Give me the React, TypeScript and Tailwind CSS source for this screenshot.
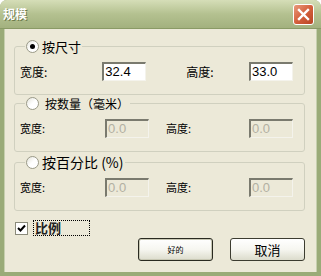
import React from "react";

const cjk = { fontFamily: '"Noto Sans CJK SC", "Noto Sans", sans-serif' };
const latin = { fontFamily: '"Liberation Sans", "Noto Sans CJK SC", sans-serif' };

function Radio({ checked }: { checked?: boolean }) {
  return (
    <span className="flex h-[13px] w-[13px] items-center justify-center rounded-full border border-[#9a9a88] bg-gradient-to-br from-[#e4e4da] via-white to-white">
      {checked ? <span className="h-[5px] w-[5px] rounded-full bg-black" /> : null}
    </span>
  );
}

function Field({ value, disabled }: { value: string; disabled?: boolean }) {
  return (
    <div
      className={`h-[19px] w-[44px] border-t-2 border-l-2 border-t-[#7a7a6e] border-l-[#7a7a6e] border-b border-r border-b-[#f4f3ec] border-r-[#f4f3ec] pl-[1px] text-[13px] leading-[16px] ${
        disabled ? "bg-[#ece9d8] text-[#b2b0a2]" : "bg-white text-black"
      }`}
      style={latin}
    >
      {value}
    </div>
  );
}

function Group({
  title,
  titleClass,
  checked,
  labelClass,
  leftGap,
  rightLabelGap,
  a,
  b,
  disabled,
}: {
  title: string;
  titleClass: string;
  checked?: boolean;
  labelClass: string;
  leftGap: string;
  rightLabelGap: string;
  a: string;
  b: string;
  disabled?: boolean;
}) {
  return (
    <fieldset className="rounded-[3px] border border-[#d0d0bf] px-[5px] pb-[13px] pt-[8px]">
      <legend className="ml-[5px] flex items-center gap-[3px] px-[1px]">
        <Radio checked={checked} />
        <span className={`${titleClass} text-black`} style={cjk}>
          {title}
        </span>
      </legend>
      <div className="flex items-center">
        <span className={`${labelClass} text-black`} style={cjk}>
          宽度:
        </span>
        <div className={leftGap} />
        <Field value={a} disabled={disabled} />
        <div className={rightLabelGap} />
        <span className={`${labelClass} text-black`} style={cjk}>
          高度:
        </span>
        <div className="flex-1" />
        <Field value={b} disabled={disabled} />
        <div className="w-[6px]" />
      </div>
    </fieldset>
  );
}

function Button({ label, isDefault, textClass }: { label: string; isDefault?: boolean; textClass: string }) {
  return (
    <div
      className={`flex h-[23px] w-[75px] items-center justify-center rounded-[3px] border ${
        isDefault ? "border-[#2a2a20] shadow-[inset_0_0_0_1px_#c8c8b4]" : "border-[#3c3c30]"
      } bg-gradient-to-b from-white via-[#f6f6f0] to-[#dcdccc]`}
    >
      <span className={`${textClass} text-black`} style={cjk}>
        {label}
      </span>
    </div>
  );
}

export default function App() {
  return (
    <div className="flex h-[276px] w-[321px] flex-col overflow-hidden rounded-t-[7px] bg-[#9aab78]">
      <div className="flex h-[29px] items-center justify-between border-b border-[#8a9a66] bg-gradient-to-b from-[#d6deb8] via-[#b4c190] to-[#a3b17f] pl-[3px] pr-[7px]">
        <span className="text-[12px] font-bold text-white [text-shadow:1px_1px_0_#6c7a4c]" style={cjk}>
          规模
        </span>
        <div className="flex h-[21px] w-[21px] items-center justify-center rounded-[3px] border border-white bg-gradient-to-br from-[#e89a7c] via-[#d4603c] to-[#b84424]">
          <svg width="13" height="13" viewBox="0 0 13 13">
            <path d="M2 2 L11 11 M11 2 L2 11" stroke="white" strokeWidth="2.4" strokeLinecap="square" />
          </svg>
        </div>
      </div>
      <div className="mx-[4px] mb-[4px] flex flex-1 flex-col border-l border-r border-[#c6cfae] bg-[#ece9d8] pl-[9px] pr-[11px] pt-[10px]">
        <Group
          title="按尺寸"
          titleClass="text-[13px] leading-[15px]"
          checked
          labelClass="text-[12px] leading-[14px]"
          leftGap="w-[55px]"
          rightLabelGap="w-[40px]"
          a="32.4"
          b="33.0"
        />
        <div className="h-[1px]" />
        <Group
          title="按数量（毫米）"
          titleClass="ml-[3px] text-[12px] leading-[15px]"
          labelClass="text-[11px] leading-[13px]"
          leftGap="w-[60px]"
          rightLabelGap="w-[17px]"
          a="0.0"
          b="0.0"
          disabled
        />
        <div className="h-[2px]" />
        <Group
          title="按百分比 (%)"
          titleClass="text-[14px] leading-[16px]"
          labelClass="text-[11px] leading-[13px]"
          leftGap="w-[60px]"
          rightLabelGap="w-[17px]"
          a="0.0"
          b="0.0"
          disabled
        />
        <div className="mt-[9px] flex items-center pl-[1px]">
          <span className="flex h-[13px] w-[13px] items-center justify-center border border-[#8a8a7a] bg-white">
            <svg width="9" height="9" viewBox="0 0 9 9">
              <path d="M1 4 L3.5 6.5 L8 1.5" fill="none" stroke="black" strokeWidth="2" />
            </svg>
          </span>
          <span
            className="ml-[5px] w-[57px] border border-dotted border-black pl-[1px] text-[13px] font-semibold leading-[14px] text-[#222]"
            style={cjk}
          >
            比例
          </span>
        </div>
        <div className="mt-[2px] flex justify-end gap-[17px]">
          <Button label="好的" isDefault textClass="text-[8px]" />
          <Button label="取消" textClass="text-[13px]" />
        </div>
      </div>
    </div>
  );
}
